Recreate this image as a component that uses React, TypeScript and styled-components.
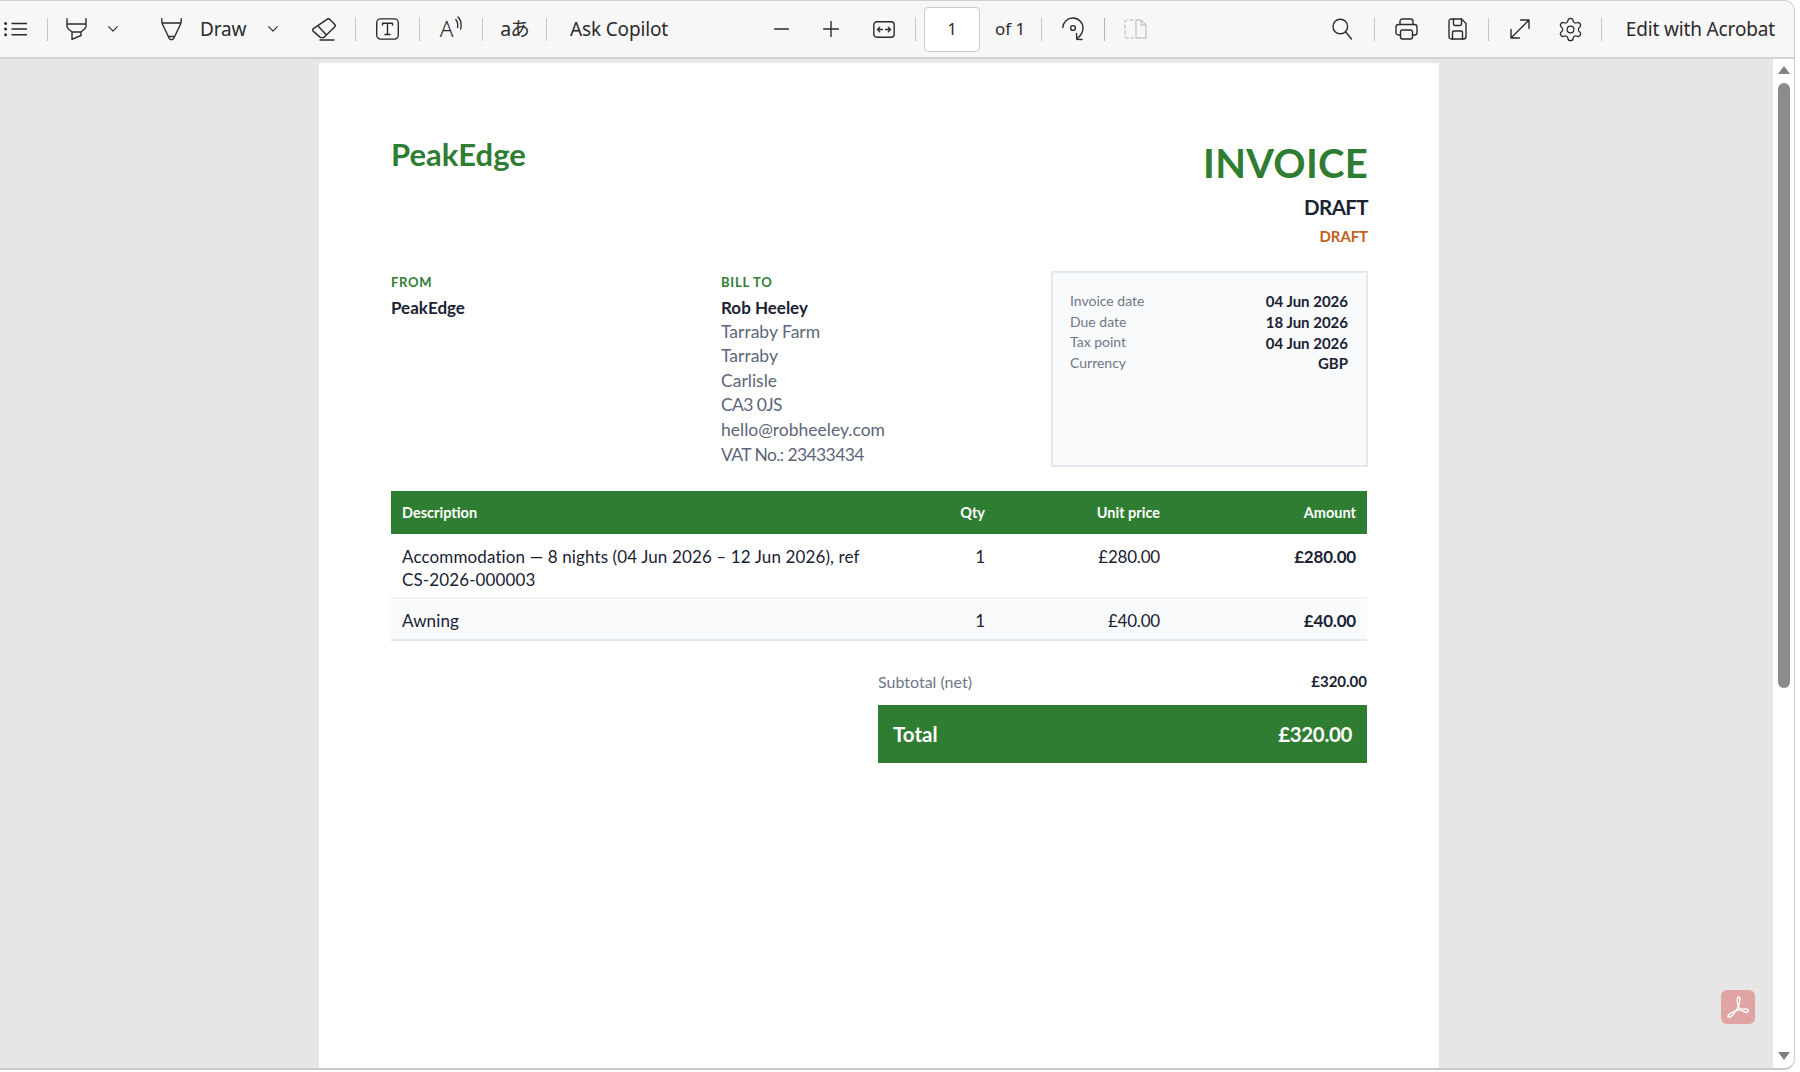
import React from 'react'
import styled, { createGlobalStyle } from 'styled-components'
import { Settings } from 'lucide-react'

const GlobalStyle = createGlobalStyle`
  html, body { margin: 0; padding: 0; background: #fff; }
  body { font-family: "Noto Sans", sans-serif; }
`

const Frame = styled.div`
  width: 1795px;
  height: 1070px;
  box-sizing: border-box;
  display: flex;
  flex-direction: column;
  overflow: hidden;
  border-top: 1px solid #cfcfcf;
  border-right: 1px solid #cfcfcf;
  border-bottom: 2px solid #c8c8c8;
  border-radius: 0 11px 11px 0;
`

const Toolbar = styled.div`
  height: 58px;
  flex: none;
  box-sizing: border-box;
  display: grid;
  grid-template-columns: 774px 1fr auto;
  align-items: center;
  background: #f7f7f7;
  border-bottom: 2px solid #d2d2d2;
  color: #2b2b2b;
`

const ToolGroup = styled.div<{ $pad?: number; $end?: number }>`
  display: flex;
  align-items: center;
  height: 100%;
  padding-left: ${p => p.$pad || 0}px;
  padding-right: ${p => p.$end || 0}px;
`

const Slot = styled.div<{ $ml?: number; $w?: number }>`
  display: flex;
  align-items: center;
  justify-content: center;
  flex: none;
  margin-left: ${p => p.$ml || 0}px;
  ${p => (p.$w ? `width: ${p.$w}px;` : '')}
  svg { flex: none; }
`

const Sep = styled.div<{ $ml: number; $dark?: boolean }>`
  width: 1px;
  height: 23px;
  flex: none;
  margin-left: ${p => p.$ml}px;
  background: ${p => (p.$dark ? '#b4b4b4' : '#c6c6c6')};
`

const ToolText = styled.span<{ $ml?: number; $w?: number; $small?: boolean }>`
  flex: none;
  margin-left: ${p => p.$ml || 0}px;
  ${p => (p.$w ? `width: ${p.$w}px;` : '')}
  font-size: ${p => (p.$small ? 17 : 19)}px;
  letter-spacing: ${p => (p.$small ? 0 : -0.15)}px;
  line-height: 24px;
  white-space: nowrap;
  color: #2b2b2b;
`

const ReadAloud = styled.span`
  display: flex;
  align-items: flex-start;
  font-size: 22.5px;
  font-weight: 300;
  line-height: 26px;
  svg { margin: 0 0 0 2px; }
`

const TranslateGlyph = styled.span`
  font-family: "Noto Sans", "Noto Sans CJK JP", sans-serif;
  font-size: 19.5px;
  line-height: 24px;
  letter-spacing: -1px;
  white-space: nowrap;
`

const PageInput = styled.div`
  width: 56px;
  height: 45px;
  flex: none;
  margin-left: 8px;
  box-sizing: border-box;
  display: flex;
  align-items: center;
  justify-content: center;
  background: #fff;
  border: 1px solid #c9c9c9;
  border-radius: 4px;
  font-size: 16px;
`

const Viewer = styled.div`
  flex: 1;
  display: flex;
  min-height: 0;
`

const Canvas = styled.div`
  position: relative;
  flex: 1;
  background: #e6e6e6;
  padding: 4px 0 0 319px;
  overflow: hidden;
`

const Scrollbar = styled.div`
  width: 21px;
  flex: none;
  background: #fff;
  display: flex;
  flex-direction: column;
  align-items: center;
  padding: 7px 0 8px;
  box-sizing: border-box;
`

const Arrow = styled.div<{ $down?: boolean }>`
  width: 0;
  height: 0;
  border-left: 6px solid transparent;
  border-right: 6px solid transparent;
  ${p => (p.$down ? 'border-top: 8px solid #808080; margin-top: auto;' : 'border-bottom: 8px solid #808080;')}
`

const Thumb = styled.div`
  width: 12px;
  height: 605px;
  margin-top: 9px;
  border-radius: 6px;
  background: #8c8c8c;
`

const AcrobatBadge = styled.div`
  position: absolute;
  right: 18px;
  bottom: 44px;
  width: 34px;
  height: 34px;
  border-radius: 6px;
  background: #e0a4a4;
  display: flex;
  align-items: center;
  justify-content: center;
`

const Page = styled.div`
  width: 1120px;
  min-height: 1100px;
  box-sizing: border-box;
  background: #fff;
  padding: 78px 72px 0;
  font-family: Lato, "Liberation Sans", sans-serif;
  color: #1a2233;
`

const Header = styled.div`
  display: flex;
  justify-content: space-between;
  align-items: flex-start;
`

const Brand = styled.div`
  font-size: 31px;
  line-height: 27px;
  font-weight: 700;
  color: #2e7d32;
`

const TitleBlock = styled.div`
  display: flex;
  flex-direction: column;
  align-items: flex-end;
  margin-right: -1px;
`

const Title = styled.div`
  font-size: 40px;
  line-height: 44px;
  font-weight: 700;
  letter-spacing: 0.25px;
  color: #2e7d32;
`

const DocNumber = styled.div`
  margin-top: 9px;
  font-size: 20.5px;
  line-height: 26px;
  font-weight: 700;
  letter-spacing: -0.6px;
  color: #1a2233;
`

const StatusTag = styled.div`
  margin-top: 6px;
  font-size: 15px;
  line-height: 20px;
  font-weight: 700;
  letter-spacing: -0.1px;
  color: #c2611a;
`

const InfoGrid = styled.div`
  display: grid;
  grid-template-columns: 330px 330px 317px;
  margin-top: 25px;
  margin-right: -1px;
`

const Party = styled.div`
  padding-top: 1px;
`

const PartyLabel = styled.div`
  font-size: 13px;
  line-height: 20px;
  font-weight: 700;
  letter-spacing: 0.75px;
  color: #2e7d32;
`

const PartyName = styled.div`
  margin: 5px 0 1px;
  font-size: 17px;
  line-height: 22px;
  font-weight: 700;
  color: #1a2233;
`

const AddressLine = styled.div<{ $tight?: boolean }>`
  font-size: 17.5px;
  line-height: 24.4px;
  color: #5d6679;
  ${p => (p.$tight ? 'letter-spacing: -0.6px;' : '')}
  &:last-child { margin-top: 0.5px; }
`

const MetaBox = styled.div`
  height: 196px;
  box-sizing: border-box;
  padding: 17px 18px 0 17px;
  background: #f8fafc;
  border: 2px solid #e4e8f0;
`

const MetaRow = styled.div`
  display: flex;
  justify-content: space-between;
  align-items: center;
  height: 20.7px;
`

const MetaLabel = styled.span`
  font-size: 14px;
  color: #6f7787;
`

const MetaValue = styled.span`
  font-size: 15px;
  font-weight: 700;
  color: #1a2233;
  position: relative;
  top: 1px;
`

const Table = styled.div`
  margin-top: 24px;
`

const TableRow = styled.div<{ $head?: boolean; $alt?: boolean }>`
  display: grid;
  grid-template-columns: 480px 125px 175px 196px;
  box-sizing: border-box;
  ${p =>
    p.$head
      ? `
    height: 43px;
    align-items: center;
    background: #2e7d32;
    color: #fff;
    font-size: 14.5px;
    font-weight: 700;
  `
      : `
    padding: ${p.$alt ? '10px' : '11px'} 0 ${p.$alt ? '7px' : '6px'};
    line-height: 23px;
    font-size: 17px;
    background: ${p.$alt ? '#f8fafc' : '#fff'};
    border-bottom: 2px solid ${p.$alt ? '#e4e8f0' : '#eef1f5'};
  `}
`

const Cell = styled.div<{ $right?: boolean; $bold?: boolean; $num?: boolean; $wide?: boolean }>`
  padding: 0 11px;
  text-align: ${p => (p.$right ? 'right' : 'left')};
  ${p => (p.$bold ? 'font-weight: 700;' : '')}
  ${p => (p.$num ? 'letter-spacing: -0.2px;' : '')}
  ${p => (p.$wide ? 'letter-spacing: 0.12px;' : '')}
`

const Totals = styled.div`
  margin: 29px 0 0 487px;
`

const SubtotalRow = styled.div`
  display: flex;
  justify-content: space-between;
  align-items: center;
  height: 22px;
`

const SubtotalLabel = styled.span`
  font-size: 16px;
  color: #6f7787;
`

const SubtotalValue = styled.span`
  font-size: 15px;
  font-weight: 700;
`

const TotalBar = styled.div`
  height: 58px;
  margin-top: 13px;
  padding: 0 15px;
  display: flex;
  align-items: center;
  justify-content: space-between;
  background: #2e7d32;
  color: #fff;
  font-size: 20.5px;
  font-weight: 700;
`

const TotalValue = styled.span`
  letter-spacing: -0.35px;
`

type IconProps = { w: number; h: number; children: React.ReactNode; color?: string }

const Icon = ({ w, h, children, color = '#2b2b2b' }: IconProps) => (
  <svg
    width={w}
    height={h}
    viewBox={`0 0 ${w} ${h}`}
    fill="none"
    stroke={color}
    strokeWidth={1.4}
    strokeLinecap="round"
    strokeLinejoin="round"
  >
    {children}
  </svg>
)

const Chevron = () => (
  <Icon w={10} h={6}>
    <path d="M0.7 0.7L5 5.2L9.3 0.7" strokeWidth={1.1} />
  </Icon>
)

const App = () => {
  return (
    <>
      <GlobalStyle />
      <Frame>
        <Toolbar>
          <ToolGroup $pad={4}>
            <Slot $w={23}>
              <Icon w={23} h={16}>
                <path d="M8 2.5H23M8 8H23M8 13.8H23" />
                <circle cx="1.6" cy="2.5" r="0.8" fill="#2b2b2b" />
                <circle cx="1.6" cy="8" r="0.8" fill="#2b2b2b" />
                <circle cx="1.6" cy="13.8" r="0.8" fill="#2b2b2b" />
              </Icon>
            </Slot>
            <Sep $ml={20} />
            <Slot $ml={18} $w={21}>
              <Icon w={21} h={22}>
                <path d="M1 0.7V8Q1 10 3 11.5L6 14V21.3L15 17.5V14L18 11.5Q20 10 20 8V0.7M1 6H20M6 14H15" />
              </Icon>
            </Slot>
            <Slot $ml={21} $w={10}>
              <Chevron />
            </Slot>
            <Slot $ml={43} $w={21}>
              <Icon w={21} h={23}>
                <path d="M0.8 0.7V3Q0.8 5 1.5 6.2L8.3 20.5Q10.5 23 12.7 20.5L19.5 6.2Q20.2 5 20.2 3V0.7M1 5H20M7.5 18.5H13.5" />
              </Icon>
            </Slot>
            <ToolText $ml={18} $w={45}>Draw</ToolText>
            <Slot $ml={23} $w={10}>
              <Chevron />
            </Slot>
            <Slot $ml={34} $w={24}>
              <Icon w={24} h={23}>
                <path d="M15 1.4a2 2 0 0 1 2.8 0L22.6 6.2a2 2 0 0 1 0 2.8L11.8 19.6H8.6L1.4 13.4a2 2 0 0 1 0-2.8ZM6.5 8.5L14.5 17M8 22H22" />
              </Icon>
            </Slot>
            <Sep $ml={19} />
            <Slot $ml={20} $w={23}>
              <Icon w={23} h={22}>
                <rect x="0.7" y="0.9" width="21.6" height="20.2" rx="4" />
                <path d="M6.5 7V5.2H16.5V7M11.5 5.2V16.5M9 16.5H14" />
              </Icon>
            </Slot>
            <Sep $ml={20} />
            <Slot $ml={20} $w={22}>
              <ReadAloud>
                A
                <Icon w={7} h={14}>
                  <path d="M0.8 3.5Q3.5 6.5 2.5 11.5M3 1Q7.5 5.5 5.6 13" strokeWidth={1.3} />
                </Icon>
              </ReadAloud>
            </Slot>
            <Sep $ml={20} />
            <Slot $ml={18} $w={27}>
              <TranslateGlyph>aあ</TranslateGlyph>
            </Slot>
            <Sep $ml={18} />
            <ToolText $ml={23}>Ask Copilot</ToolText>
          </ToolGroup>

          <ToolGroup>
            <Slot $w={15}>
              <Icon w={15} h={2}>
                <path d="M0.5 1H14.5" />
              </Icon>
            </Slot>
            <Slot $ml={34} $w={16}>
              <Icon w={16} h={16}>
                <path d="M0.5 8H15.5M8 0.5V15.5" />
              </Icon>
            </Slot>
            <Slot $ml={34} $w={22}>
              <Icon w={22} h={17}>
                <rect x="0.8" y="0.8" width="20.4" height="15.4" rx="3" />
                <path d="M4.5 8.5H9.5M4.5 8.5L6.7 6.3M4.5 8.5L6.7 10.7M17.5 8.5H12.5M17.5 8.5L15.3 6.3M17.5 8.5L15.3 10.7" strokeWidth={1.3} />
              </Icon>
            </Slot>
            <Sep $ml={20} />
            <PageInput>1</PageInput>
            <ToolText $ml={15} $w={28} $small>of 1</ToolText>
            <Sep $ml={18} />
            <Slot $ml={20} $w={22}>
              <Icon w={22} h={24}>
                <path d="M0.8 10.5A10 10 0 0 1 11 1A10 10 0 0 1 21 11C21 15.5 18.5 19 15 21.8" />
                <path d="M14.5 16.5L14.8 22.2L20 22.5" />
                <circle cx="11" cy="11" r="2.4" />
              </Icon>
            </Slot>
            <Sep $ml={20} $dark />
            <Slot $ml={19} $w={23}>
              <Icon w={23} h={20} color="#c8c8c8">
                <path d="M9 1H3.5Q1 1 1 3.5V16.5Q1 19 3.5 19H9" strokeDasharray="3 3" />
                <path d="M12 1H17L22 6V19H12ZM17 1V6H22" />
              </Icon>
            </Slot>
          </ToolGroup>

          <ToolGroup $end={19}>
            <Slot $w={20}>
              <Icon w={20} h={22}>
                <circle cx="8.3" cy="8.5" r="7.3" />
                <path d="M13.6 13.8L19.5 21" />
              </Icon>
            </Slot>
            <Sep $ml={22} />
            <Slot $ml={20} $w={23}>
              <Icon w={23} h={22}>
                <path d="M5 6.5V3.5Q5 1 7.5 1H15.5Q18 1 18 3.5V6.5" />
                <path d="M5.5 17H3.5Q1 17 1 14.5V9Q1 6.5 3.5 6.5H19.5Q22 6.5 22 9V14.5Q22 17 19.5 17H17.5" />
                <rect x="5.5" y="12" width="12" height="9" rx="2" />
              </Icon>
            </Slot>
            <Slot $ml={30} $w={19}>
              <Icon w={19} h={22}>
                <path d="M3.5 1H13.5L18 5.5V18.5Q18 21 15.5 21H3.5Q1 21 1 18.5V3.5Q1 1 3.5 1Z" />
                <path d="M5.5 1V6Q5.5 7.5 7 7.5H12Q13.5 7.5 13.5 6V1" />
                <path d="M4.5 21V14.5Q4.5 13 6 13H13Q14.5 13 14.5 14.5V21" />
              </Icon>
            </Slot>
            <Sep $ml={21} />
            <Slot $ml={21} $w={20}>
              <Icon w={20} h={20}>
                <path d="M1 19L19 1M10.5 1H19V9.5M1 10.5V19H9.5" />
              </Icon>
            </Slot>
            <Slot $ml={29} $w={23}>
              <Settings size={27} strokeWidth={1.1} color="#2b2b2b" />
            </Slot>
            <Sep $ml={19} />
            <ToolText $ml={24}>Edit with Acrobat</ToolText>
          </ToolGroup>
        </Toolbar>

        <Viewer>
          <Canvas>
            <Page>
              <Header>
                <Brand>PeakEdge</Brand>
                <TitleBlock>
                  <Title>INVOICE</Title>
                  <DocNumber>DRAFT</DocNumber>
                  <StatusTag>DRAFT</StatusTag>
                </TitleBlock>
              </Header>

              <InfoGrid>
                <Party>
                  <PartyLabel>FROM</PartyLabel>
                  <PartyName>PeakEdge</PartyName>
                </Party>
                <Party>
                  <PartyLabel>BILL TO</PartyLabel>
                  <PartyName>Rob Heeley</PartyName>
                  <AddressLine>Tarraby Farm</AddressLine>
                  <AddressLine>Tarraby</AddressLine>
                  <AddressLine>Carlisle</AddressLine>
                  <AddressLine $tight>CA3 0JS</AddressLine>
                  <AddressLine>hello@robheeley.com</AddressLine>
                  <AddressLine $tight>VAT No.: 23433434</AddressLine>
                </Party>
                <MetaBox>
                  <MetaRow>
                    <MetaLabel>Invoice date</MetaLabel>
                    <MetaValue>04 Jun 2026</MetaValue>
                  </MetaRow>
                  <MetaRow>
                    <MetaLabel>Due date</MetaLabel>
                    <MetaValue>18 Jun 2026</MetaValue>
                  </MetaRow>
                  <MetaRow>
                    <MetaLabel>Tax point</MetaLabel>
                    <MetaValue>04 Jun 2026</MetaValue>
                  </MetaRow>
                  <MetaRow>
                    <MetaLabel>Currency</MetaLabel>
                    <MetaValue>GBP</MetaValue>
                  </MetaRow>
                </MetaBox>
              </InfoGrid>

              <Table>
                <TableRow $head>
                  <Cell>Description</Cell>
                  <Cell $right>Qty</Cell>
                  <Cell $right>Unit price</Cell>
                  <Cell $right>Amount</Cell>
                </TableRow>
                <TableRow>
                  <Cell $wide>Accommodation — 8 nights (04 Jun 2026 – 12 Jun 2026), ref CS-2026-000003</Cell>
                  <Cell $right>1</Cell>
                  <Cell $right $num>£280.00</Cell>
                  <Cell $right $bold $num>£280.00</Cell>
                </TableRow>
                <TableRow $alt>
                  <Cell $wide>Awning</Cell>
                  <Cell $right>1</Cell>
                  <Cell $right $num>£40.00</Cell>
                  <Cell $right $bold $num>£40.00</Cell>
                </TableRow>
              </Table>

              <Totals>
                <SubtotalRow>
                  <SubtotalLabel>Subtotal (net)</SubtotalLabel>
                  <SubtotalValue>£320.00</SubtotalValue>
                </SubtotalRow>
                <TotalBar>
                  <span>Total</span>
                  <TotalValue>£320.00</TotalValue>
                </TotalBar>
              </Totals>
            </Page>

            <AcrobatBadge>
              <svg width="26" height="26" viewBox="0 0 26 26" fill="none" stroke="#fff" strokeWidth="1.4" strokeLinejoin="round">
                <path d="M3 23C2 20.5 9 17 14.5 15.5C18 14.5 24 14.5 23.5 17C23 19.5 17 18 14.5 14.5C12 11 11.5 3.5 13.5 3C15.5 2.5 15 8 13.5 12C12 16 6 25 3 23Z" />
              </svg>
            </AcrobatBadge>
          </Canvas>

          <Scrollbar>
            <Arrow />
            <Thumb />
            <Arrow $down />
          </Scrollbar>
        </Viewer>
      </Frame>
    </>
  )
}

export default App
